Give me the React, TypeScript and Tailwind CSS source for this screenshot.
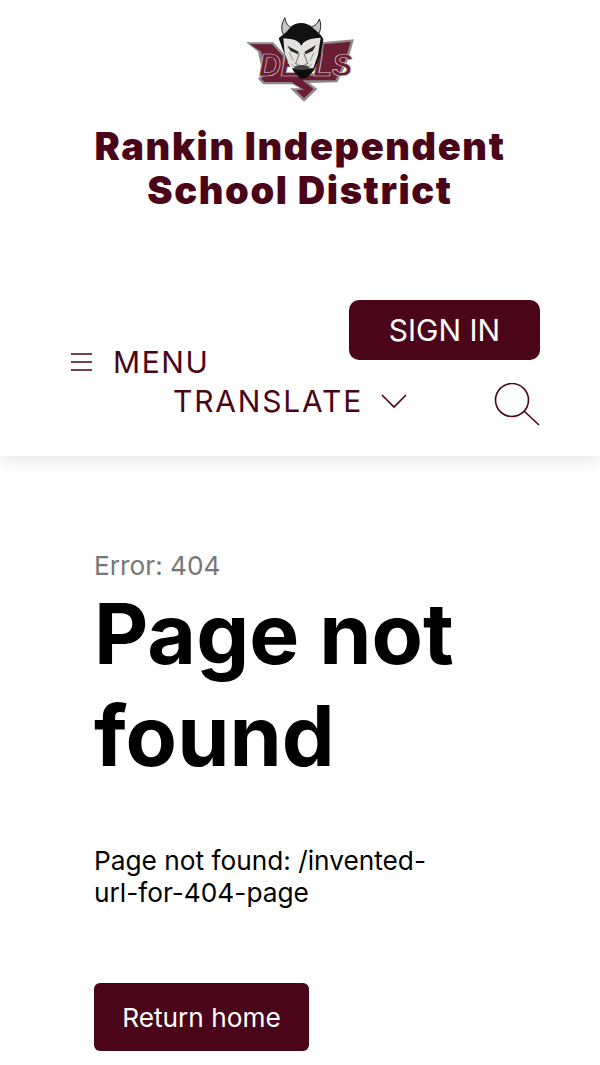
const maroon = '#6b1d33';

// traced by eye from the crest, in 3x crop coordinates
const DevilsLogo = () => (
  <svg viewBox="0 0 420 315" className="w-[140px] h-[105px] shrink-0">
    {/* silver backing */}
    <path
      d="M48 112 L130 112 L165 150 L165 205 L262 205 L275 112 L372 103 L352 170 L322 232 L238 234 L262 252 L222 290 L180 250 L210 250 L188 238 L100 238 L84 222 L98 205 L84 140 Z"
      fill="#8d8a8c"
    />
    {/* maroon body and tail */}
    <path
      d="M60 118 L126 118 L158 152 L158 212 L268 212 L282 118 L362 110 L345 168 L316 226 L218 226 L250 252 L222 280 L198 256 L222 254 L184 231 L104 231 L94 221 L106 208 L94 140 Z"
      fill={maroon}
    />
    <text x="86" y="214" fontFamily="'Liberation Sans', sans-serif" fontWeight="700" fontStyle="italic" fontSize="92" fill={maroon} stroke="#d9d5d6" strokeWidth="2">DE</text>
    <text x="250" y="212" fontFamily="'Liberation Sans', sans-serif" fontWeight="700" fontStyle="italic" fontSize="92" fill={maroon} stroke="#d9d5d6" strokeWidth="2">LS</text>
    {/* horns */}
    <path d="M165 38 C152 58 152 80 166 98 L188 70 C174 64 166 54 165 38 Z" fill="#c9c7c7" stroke="#222" strokeWidth="3" />
    <path d="M268 42 C276 62 272 82 258 98 L240 68 C254 64 264 56 268 42 Z" fill="#c9c7c7" stroke="#222" strokeWidth="3" />
    {/* head and hair */}
    <path d="M182 66 C198 50 230 50 248 68 C262 80 278 92 280 104 L272 150 L252 196 L232 218 L212 222 L192 200 L168 160 L146 100 C158 90 172 80 182 66 Z" fill="#111" />
    <path d="M160 100 C178 102 202 100 214 122 C226 100 252 100 272 98 L264 150 L250 190 L182 190 L164 146 Z" fill="#e4e2e0" />
    {/* brows, eyes, nose, mouth */}
    <path d="M172 122 L206 140 L204 148 L182 138 Z M258 120 L224 140 L226 148 L248 138 Z" fill="#2a2a2a" />
    <path d="M208 146 L200 168 L196 176 L206 178 M222 146 L230 168 L234 176 L224 178" fill="none" stroke="#555" strokeWidth="2.5" />
    <path d="M178 142 L190 168 M252 142 L240 168 M184 176 L196 190 M246 176 L234 190" fill="none" stroke="#8a8a8a" strokeWidth="2.5" />
    <path d="M192 186 C204 178 226 178 238 186 L230 194 L200 194 Z" fill="#444" />
    <path d="M198 196 L232 196 L224 218 L208 218 Z" fill="#0d0d0d" />
  </svg>
);

const MenuIcon = () => (
  <svg viewBox="0 0 21 18" className="w-[21px] h-[18px]" fill="none" stroke="currentColor" strokeWidth="1.6">
    <path d="M0 1h21M0 9h21M0 17h21" />
  </svg>
);

const ChevronIcon = () => (
  <svg viewBox="0 0 26 15" className="w-[26px] h-[15px]" fill="none" stroke="currentColor" strokeWidth="1.6">
    <path d="M1 1l12 12L25 1" />
  </svg>
);

const SearchIcon = () => (
  <svg viewBox="0 0 46 44" className="w-[46px] h-[44px]" fill="none" stroke="currentColor" strokeWidth="1.6">
    <circle cx="18" cy="17" r="16.5" />
    <path d="M30 28l15 14" />
  </svg>
);

export default function App() {
  return (
    <div className="min-h-[1065px] bg-white font-['Inter',sans-serif] overflow-hidden">
      <header className="h-[456px] shadow-[0_4px_16px_rgba(0,0,0,0.1)] flex flex-col items-center pt-[5px]">
        <DevilsLogo />
        <h1 className="mt-[14px] w-full text-center text-[38px] leading-[44px] font-black tracking-[1.6px] text-[#4a0519]">
          Rankin Independent
          <br />
          School District
        </h1>
        <nav className="mt-[88px] w-full pl-[71px] pr-[60px] text-[#4a0519]">
          <div className="flex justify-between h-[80px]">
            <button className="self-end h-9 flex items-center gap-[21px] text-[30px] tracking-[1.6px]">
              <MenuIcon />
              MENU
            </button>
            <button className="self-start w-[191px] h-[60px] rounded-[10px] bg-[#4a0519] text-white text-[30px]">
              SIGN IN
            </button>
          </div>
          <div className="flex justify-end items-center h-[46px]">
            <button className="flex items-center gap-[18px] text-[30px] tracking-[1.8px] mr-[87px] mb-1">
              TRANSLATE
              <ChevronIcon />
            </button>
            <div className="mt-1">
              <SearchIcon />
            </div>
          </div>
        </nav>
      </header>
      <main className="pl-[94px] pr-[130px] pt-[93px]">
        <p className="text-[26.25px] leading-[34px] text-[#777]">Error: 404</p>
        <h2 className="text-[84px] leading-[102px] font-bold text-black">Page not found</h2>
        <p className="mt-[58px] w-[350px] text-[26.25px] leading-[32px] text-black">Page not found: /invented-url-for-404-page</p>
        <button className="mt-[74px] w-[215px] h-[68px] pt-[2px] rounded-md bg-[#4a0519] text-white text-[26.25px]">
          Return home
        </button>
      </main>
    </div>
  );
}
